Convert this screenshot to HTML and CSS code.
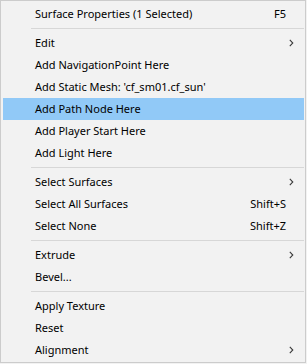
FILE: index.html
```html
<!DOCTYPE html>
<html>
<head>
<meta charset="utf-8">
<link rel="stylesheet" href="styles.css">
</head>
<body>
<div class="menu">
  <div class="item"><span class="label">Surface Properties (1 Selected)</span><span class="key">F5</span><span class="sub"></span></div>
  <div class="sep"></div>
  <div class="item"><span class="label">Edit</span><span class="sub"><svg width="5" height="8" viewBox="0 0 5 8"><path d="M0.8 0.8 L3.8 4 L0.8 7.2" fill="none" stroke="#3a3a3a" stroke-width="1.1"/></svg></span></div>
  <div class="item"><span class="label">Add NavigationPoint Here</span><span class="sub"></span></div>
  <div class="item"><span class="label">Add Static Mesh: 'cf_sm01.cf_sun'</span><span class="sub"></span></div>
  <div class="item active"><span class="label">Add Path Node Here</span><span class="sub"></span></div>
  <div class="item"><span class="label">Add Player Start Here</span><span class="sub"></span></div>
  <div class="item"><span class="label">Add Light Here</span><span class="sub"></span></div>
  <div class="sep"></div>
  <div class="item"><span class="label">Select Surfaces</span><span class="sub"><svg width="5" height="8" viewBox="0 0 5 8"><path d="M0.8 0.8 L3.8 4 L0.8 7.2" fill="none" stroke="#3a3a3a" stroke-width="1.1"/></svg></span></div>
  <div class="item"><span class="label">Select All Surfaces</span><span class="key">Shift+S</span><span class="sub"></span></div>
  <div class="item"><span class="label">Select None</span><span class="key">Shift+Z</span><span class="sub"></span></div>
  <div class="sep"></div>
  <div class="item"><span class="label">Extrude</span><span class="sub"><svg width="5" height="8" viewBox="0 0 5 8"><path d="M0.8 0.8 L3.8 4 L0.8 7.2" fill="none" stroke="#3a3a3a" stroke-width="1.1"/></svg></span></div>
  <div class="item"><span class="label">Bevel...</span><span class="sub"></span></div>
  <div class="sep"></div>
  <div class="item"><span class="label">Apply Texture</span><span class="sub"></span></div>
  <div class="item"><span class="label">Reset</span><span class="sub"></span></div>
  <div class="item"><span class="label">Alignment</span><span class="sub"><svg width="5" height="8" viewBox="0 0 5 8"><path d="M0.8 0.8 L3.8 4 L0.8 7.2" fill="none" stroke="#3a3a3a" stroke-width="1.1"/></svg></span></div>
</div>
</body>
</html>
```
FILE: styles.css
```css
html, body {
  margin: 0;
  padding: 0;
  background: #f2f2f2;
}
body {
  width: 307px;
  height: 364px;
  overflow: hidden;
}
.menu {
  box-sizing: border-box;
  width: 306px;
  height: 363px;
  border: 1px solid #cccccc;
  background: #f2f2f2;
  padding: 2px 1px 0 2px;
  font-family: "Noto Sans", "Segoe UI", sans-serif;
  font-size: 11px;
  color: #000;
}
.item {
  display: flex;
  align-items: center;
  box-sizing: border-box;
  height: 22px;
  padding-left: 32px;
  padding-bottom: 1px;
}
.item.active {
  background: #91c9f7;
}
.label {
  flex: 1;
  white-space: nowrap;
}
.key {
  white-space: nowrap;
}
.sub {
  width: 18px;
  display: flex;
  justify-content: flex-end;
  padding-right: 10px;
  box-sizing: border-box;
}
.sub svg {
  display: block;
}
.sep {
  height: 1px;
  margin: 3px 0 3px 28px;
  background: #d7d7d7;
}
```
